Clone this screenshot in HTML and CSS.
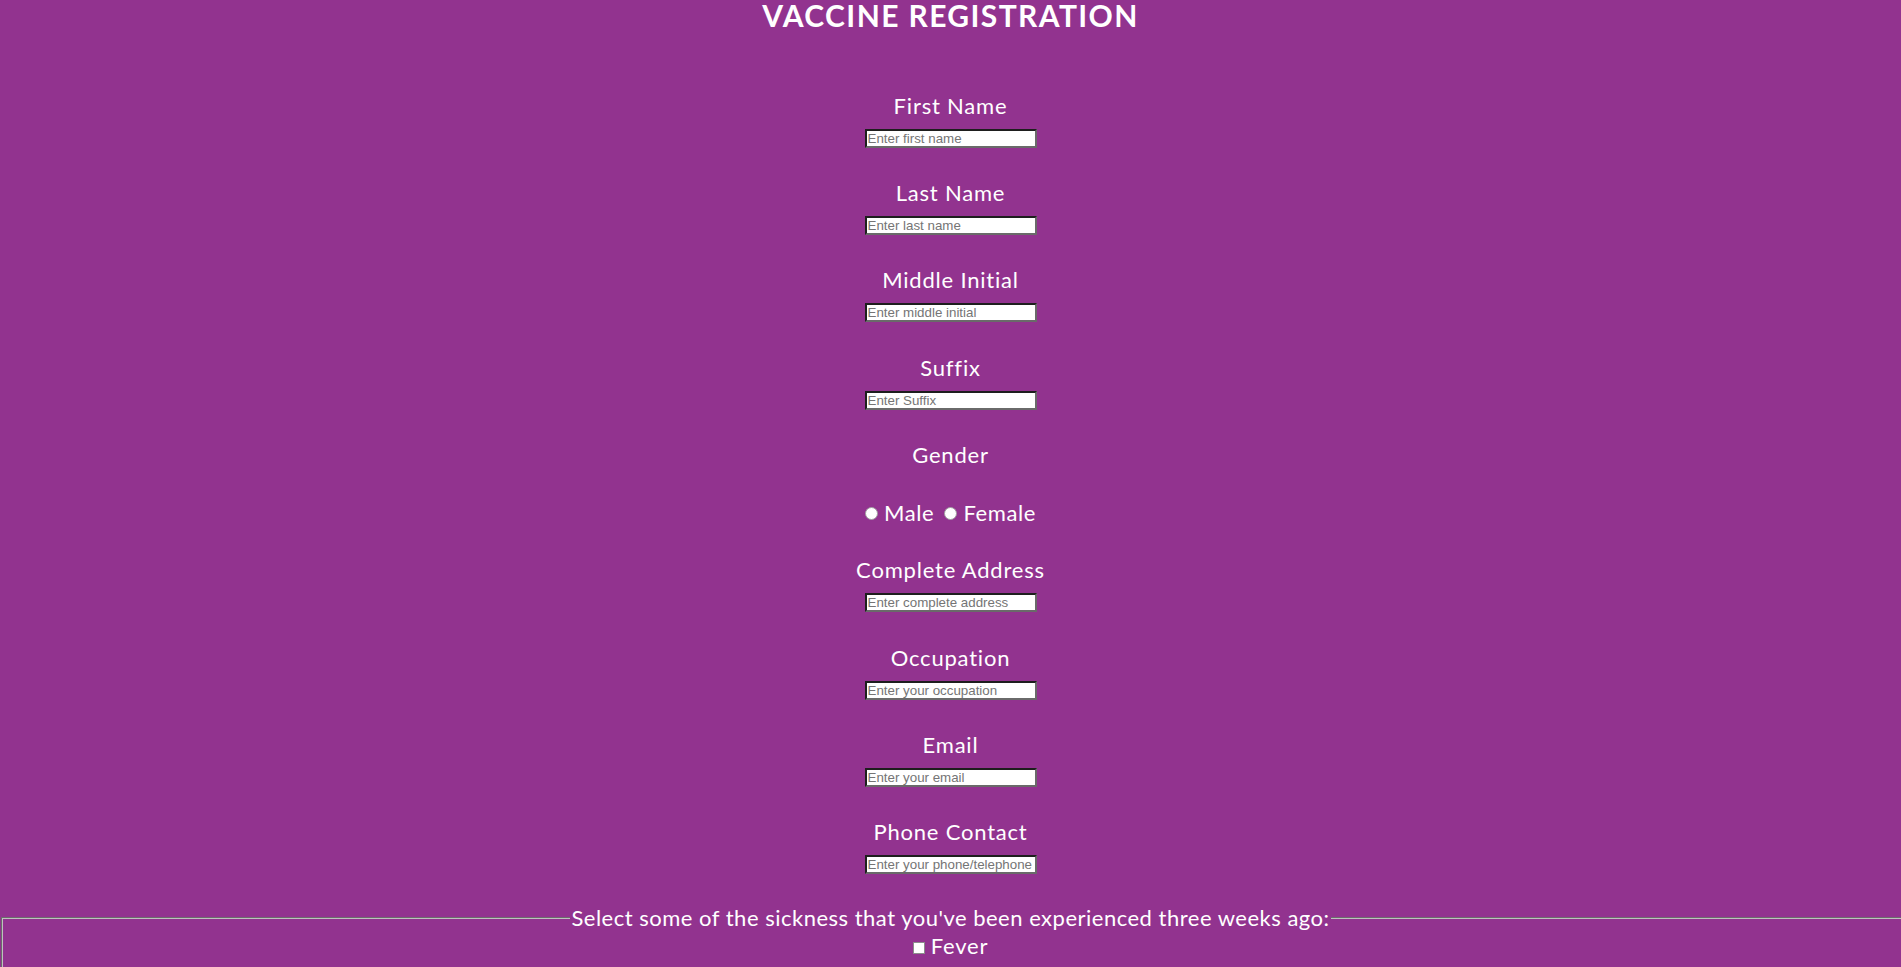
FILE: index.html
```html
<!DOCTYPE html>
<html lang="en">
<head>
<meta charset="utf-8">
<title>Vaccine Registration</title>
<link rel="stylesheet" href="styles.css">
</head>
<body>
<h1 class="title">VACCINE REGISTRATION</h1>
<form class="form">
  <div class="field">
    <label class="label" for="fn">First Name</label>
    <input class="text-input" id="fn" type="text" placeholder="Enter first name">
  </div>
  <div class="field">
    <label class="label" for="ln">Last Name</label>
    <input class="text-input" id="ln" type="text" placeholder="Enter last name">
  </div>
  <div class="field">
    <label class="label" for="mi">Middle Initial</label>
    <input class="text-input" id="mi" type="text" placeholder="Enter middle initial">
  </div>
  <div class="field">
    <label class="label" for="sf">Suffix</label>
    <input class="text-input" id="sf" type="text" placeholder="Enter Suffix">
  </div>
  <div class="field field-gender">
    <div class="label">Gender</div>
    <div class="radio-row">
      <input class="radio" type="radio" name="gender" id="male"><label for="male" class="radio-label">Male</label>
      <input class="radio" type="radio" name="gender" id="female"><label for="female" class="radio-label">Female</label>
    </div>
  </div>
  <div class="field">
    <label class="label" for="ad">Complete Address</label>
    <input class="text-input" id="ad" type="text" placeholder="Enter complete address">
  </div>
  <div class="field">
    <label class="label" for="oc">Occupation</label>
    <input class="text-input" id="oc" type="text" placeholder="Enter your occupation">
  </div>
  <div class="field">
    <label class="label" for="em">Email</label>
    <input class="text-input" id="em" type="text" placeholder="Enter your email">
  </div>
  <div class="field">
    <label class="label" for="ph">Phone Contact</label>
    <input class="text-input" id="ph" type="text" placeholder="Enter your phone/telephone number">
  </div>
  <fieldset class="sickness">
    <legend class="legend">Select some of the sickness that you've been experienced three weeks ago:</legend>
    <div class="check-row">
      <input class="check" type="checkbox" id="fever"><label for="fever" class="check-label">Fever</label>
    </div>
  </fieldset>
</form>
</body>
</html>
```
FILE: styles.css
```css
html, body {
  overflow: hidden;
}
body {
  margin: 0;
  background: #92338f;
  color: #ffffff;
  font-family: "Lato", "Open Sans", sans-serif;
  text-align: center;
}
.title {
  margin: 0;
  font-size: 30px;
  line-height: 30px;
  font-weight: 700;
  letter-spacing: 1.4px;
}
.form {
  padding-top: 64px;
}
.field {
  margin-bottom: 33.2px;
}
.label {
  display: block;
  font-size: 22px;
  line-height: 24px;
  letter-spacing: 0.8px;
  margin-bottom: 11px;
}
.text-input {
  display: block;
  margin: 0 auto;
  box-sizing: border-box;
  width: 172px;
  height: 19px;
  padding: 0 1px;
  border-width: 2px;
  border-style: solid;
  border-color: #1e1e1e #6a6a6a #6a6a6a #1e1e1e;
  background: #ffffff;
  font-family: "Liberation Sans", Arial, sans-serif;
  font-size: 13.33px;
  letter-spacing: 0;
  color: #000;
}
.text-input::placeholder {
  color: #757575;
}
.field-gender .label {
  margin-bottom: 34.4px;
}
.radio-row {
  font-size: 22px;
  line-height: 24px;
  letter-spacing: 0.6px;
}
.radio {
  appearance: none;
  -webkit-appearance: none;
  display: inline-block;
  width: 13px;
  height: 13px;
  margin: 0 6px 0 0;
  border: 1px solid #a0a0a0;
  border-radius: 50%;
  background: #ffffff;
  box-sizing: border-box;
  vertical-align: 1px;
}
.radio-label {
  margin-right: 4px;
}
.radio-label:last-child {
  margin-right: 0;
}
.sickness {
  margin: 0 0 0 1px;
  width: calc(100% - 6px);
  padding: 5px 14px 10px 0;
  border: 2px groove #c0c0c0;
}
.legend {
  margin: 0 auto;
  padding: 0 1px;
  font-size: 22px;
  line-height: 22px;
  letter-spacing: 0.5px;
}
.check-row {
  font-size: 22px;
  line-height: 24px;
  letter-spacing: 0.8px;
}
.check {
  appearance: none;
  -webkit-appearance: none;
  display: inline-block;
  width: 12px;
  height: 12px;
  margin: 0 6px 0 0;
  border: 1px solid #8c8c8c;
  background: #ffffff;
  box-sizing: border-box;
  vertical-align: 0;
}
```
